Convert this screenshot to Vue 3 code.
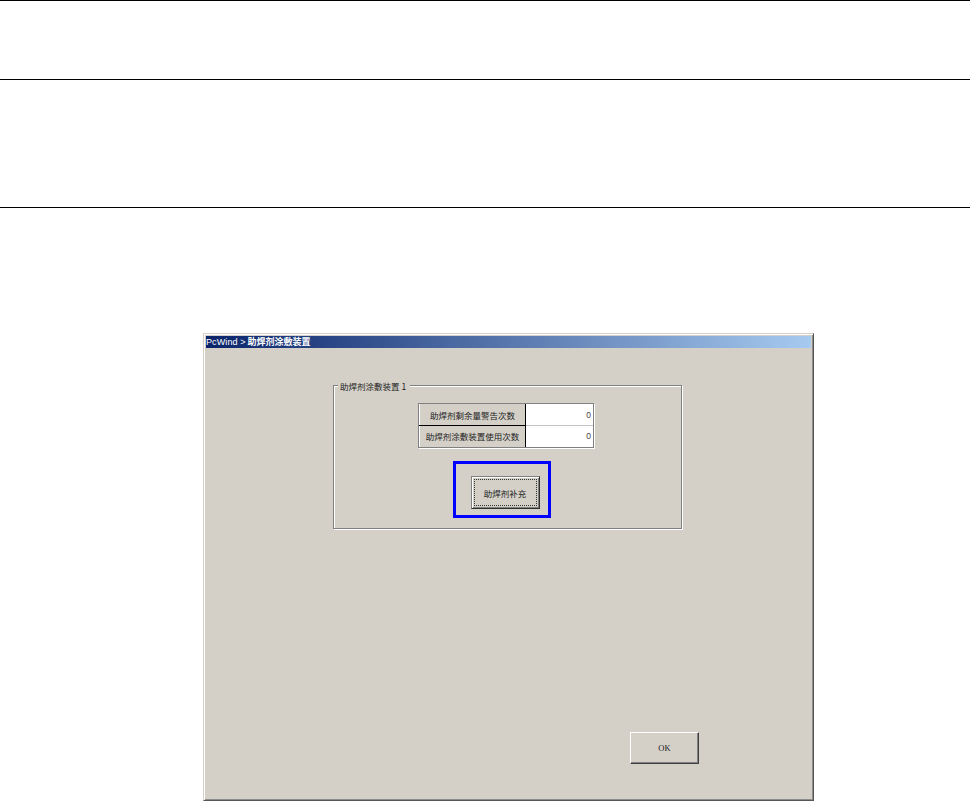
<script setup>
const rows = [
  { label: '助焊剂剩余量警告次数', value: 0 },
  { label: '助焊剂涂敷装置使用次数', value: 0 },
]
</script>

<template>
  <div class="page">
    <div class="band band-a"></div>
    <div class="band band-b"></div>
    <div class="window">
      <div class="titlebar"><span class="app">PcWind &gt;</span> 助焊剂涂敷装置</div>
      <div class="client">
        <div class="group">
          <span class="legend">助焊剂涂敷装置 1</span>
          <div class="grid">
            <div v-for="row in rows" :key="row.label" class="row">
              <div class="label">{{ row.label }}</div>
              <div class="value">{{ row.value }}</div>
            </div>
          </div>
          <div class="highlight">
            <button class="action" type="button"><span class="focus">助焊剂补充</span></button>
          </div>
        </div>
        <div class="footer">
          <button class="ok" type="button">OK</button>
        </div>
      </div>
    </div>
  </div>
</template>

<style>
html, body { margin: 0; background: #fff; }
</style>

<style scoped>
.page {
  width: 970px;
  height: 801px;
  overflow: hidden;
  background: #fff;
  font-family: "Noto Sans CJK SC", "Liberation Sans", sans-serif;
  color: #222;
  box-sizing: border-box;
  border-top: 1px solid #000;
}
.band { border-bottom: 1px solid #000; box-sizing: border-box; }
.band-a { height: 79px; }
.band-b { height: 128px; }
.window {
  box-sizing: border-box;
  width: 611px;
  height: 468px;
  margin: 125px 0 0 203px;
  padding: 2px;
  background: #d4d0c8;
  border: 1px solid;
  border-color: #d4d0c8 #555 #555 #d4d0c8;
  box-shadow: inset 1px 1px #fff, inset -1px -1px #8c8c8c;
  display: flex;
  flex-direction: column;
}
.titlebar {
  height: 12px;
  flex: none;
  background: linear-gradient(90deg, #0a246a, #a6caf0);
  color: #fff;
  font-size: 9px;
  font-weight: 700;
  line-height: 12px;
  white-space: nowrap;
}
.app { font-family: "Liberation Sans", sans-serif; font-weight: 400; letter-spacing: 0.1px; }
.client {
  flex: 1;
  display: flex;
  flex-direction: column;
  padding: 37px 112px 34px 127px;
}
.group {
  position: relative;
  box-sizing: border-box;
  width: 349px;
  height: 144px;
  border: 1px solid #808080;
  box-shadow: inset 1px 1px #fff, 1px 1px #fff;
  display: flex;
  flex-direction: column;
  align-items: center;
  padding-top: 17px;
}
.legend {
  position: absolute;
  top: -6px;
  left: 4px;
  padding: 0 4px 0 2px;
  background: #d4d0c8;
  font-size: 8.5px;
  line-height: 12px;
  white-space: nowrap;
}
.grid {
  box-sizing: border-box;
  width: 176px;
  height: 45px;
  margin-left: -3px;
  border: 1px solid #808080;
  box-shadow: 1px 1px #fff;
  display: flex;
  flex-direction: column;
}
.row { flex: 1; display: flex; border-top: 1px solid #000; margin-top: -1px; }
.row:first-child { border-top: 1px solid #808080; }
.label {
  box-sizing: border-box;
  width: 107px;
  flex: none;
  border-left: 1px solid #fff;
  border-right: 1px solid #000;
  display: flex;
  align-items: center;
  justify-content: center;
  font-size: 8.5px;
  white-space: nowrap;
}
.value {
  flex: 1;
  background: #fff;
  display: flex;
  align-items: center;
  justify-content: flex-end;
  padding-right: 2px;
  font-size: 8.5px;
  font-family: "Liberation Sans", sans-serif;
  color: #444;
  box-shadow: 0 -1px #c4c4c4;
}
.row:first-child .value { box-shadow: none; }
.highlight {
  box-sizing: border-box;
  width: 98px;
  height: 57px;
  margin-top: 13px;
  margin-left: -12px;
  padding: 6px 0 0 7px;
  border: 3px solid #0000ff;
  display: flex;
  align-items: center;
  justify-content: center;
}
.action, .ok {
  box-sizing: border-box;
  flex: none;
  background: #d4d0c8;
  border: 1px solid;
  border-color: #fff #404040 #404040 #fff;
  box-shadow: inset -1px -1px #808080;
  font-family: inherit;
  font-weight: 400;
  color: inherit;
  padding: 0;
  font-size: 8.5px;
}
.action {
  width: 69px;
  height: 33px;
  padding: 2px;
  border-color: #808080 #303030 #303030 #808080;
  box-shadow: inset 1px 1px #fff, inset -1px -1px #808080;
}
.focus {
  box-sizing: border-box;
  display: flex;
  align-items: center;
  justify-content: center;
  width: 100%;
  height: 100%;
  border: 1px dotted #333;
}
.footer { margin-top: auto; display: flex; justify-content: flex-end; }
.ok { width: 69px; height: 32px; font-family: "Liberation Serif", serif; font-size: 8.5px; color: #222; }
</style>
